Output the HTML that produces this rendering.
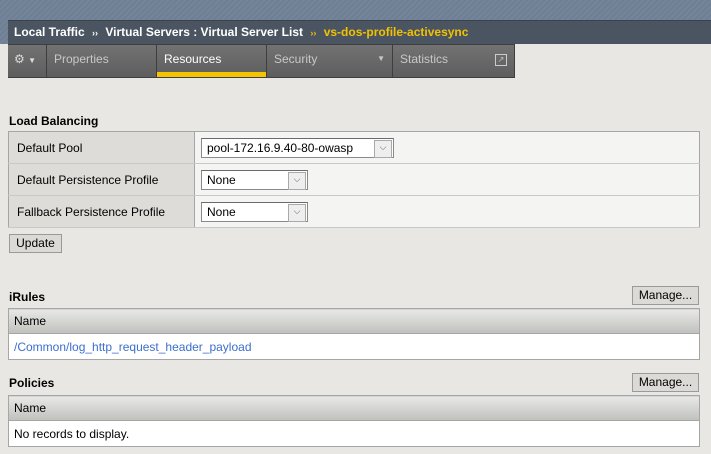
<!DOCTYPE html>
<html><head><style>
*{box-sizing:border-box;margin:0;padding:0}
body{width:711px;height:454px;background:#e9e7e3;font-family:"Liberation Sans",sans-serif;font-size:12px;color:#000;position:relative;overflow:hidden}
.ab{position:absolute}
.top{left:0;top:0;width:711px;height:44px;background:repeating-linear-gradient(135deg,#6f7f93 0 2px,#74849a 2px 4px)}
.hdr{left:8px;top:20px;width:703px;height:24px;background:#4b5562;border-top:1px solid #3a424c;color:#fff;font-weight:bold;font-size:12px;line-height:23px;padding-left:6px}
.hdr .y{color:#f2c200}
.hdr .s{font-size:9px;margin:0 4px}
.tabs{left:8px;top:44px;width:507px;height:34px;background:#3e3e3e}
.tab{position:absolute;top:1px;height:32px;background:linear-gradient(#727272,#5e5e5e);color:#c8c8c8;font-size:12px;line-height:28px;padding-left:7px}
.tab.on{color:#fff}
.tab.on:after{content:"";position:absolute;left:0;right:0;bottom:0;height:5px;background:#f5c400}
h3{position:absolute;left:9px;font-size:12px;font-weight:bold}
table{position:absolute;left:8px;width:692px;border-collapse:collapse;border:1px solid #a6a6a6}
.lb td{height:32px;border-bottom:1px solid #c8c8c8}
.lb td.l{background:#dedcd9;width:186px;padding-left:8px;border-right:1px solid #a6a6a6}
.lb td.v{background:#f4f4f3;padding-left:6px}
.sel{display:inline-block;height:20px;border:1px solid #8a8a8a;border-top-color:#6a6a6a;background:#fff;position:relative;padding-left:5px;line-height:18px;font-size:12px;vertical-align:middle}
.sel:after{content:"⌵";position:absolute;right:1px;top:1px;width:16px;height:16px;background:#eee;border:1px solid #aaa;font-size:9px;text-align:center;line-height:12px;color:#555}
.btn{position:absolute;background:#dcdad6;border:1px solid #9a9a9a;font-size:12px;text-align:center;line-height:16px}
.gt th{height:25px;background:linear-gradient(#e8e8e6,#c0c0bd);text-align:left;font-weight:normal;padding-left:5px;border-bottom:1px solid #a6a6a6}
.gt td{height:26px;background:#fff;padding-left:5px}
</style></head><body>
<div class="ab top"></div>
<div class="ab hdr">Local Traffic <span class="s">››</span> Virtual Servers : Virtual Server List <span class="s y">››</span> <span class="y">vs-dos-profile-activesync</span></div>
<div class="ab tabs">
<div class="tab" style="left:0;width:38px;color:#ddd;padding-left:6px">⚙ <span style="font-size:8px">▼</span></div>
<div class="tab" style="left:39px;width:109px">Properties</div>
<div class="tab on" style="left:149px;width:109px">Resources</div>
<div class="tab" style="left:259px;width:125px">Security<span style="position:absolute;right:7px;font-size:8px">▼</span></div>
<div class="tab" style="left:385px;width:121px">Statistics<span style="position:absolute;right:7px;top:9px;width:12px;height:12px;border:1px solid #ccc;font-size:8px;line-height:10px;text-align:center">↗</span></div>
</div>
<h3 style="top:114px">Load Balancing</h3>
<table class="lb" style="top:131px">
<tr><td class="l">Default Pool</td><td class="v"><span class="sel" style="width:193px">pool-172.16.9.40-80-owasp</span></td></tr>
<tr><td class="l">Default Persistence Profile</td><td class="v"><span class="sel" style="width:107px">None</span></td></tr>
<tr><td class="l">Fallback Persistence Profile</td><td class="v"><span class="sel" style="width:107px">None</span></td></tr>
</table>
<div class="btn" style="left:9px;top:234px;width:53px;height:19px">Update</div>
<h3 style="top:290px">iRules</h3>
<div class="btn" style="left:632px;top:286px;width:67px;height:19px">Manage...</div>
<table class="gt" style="top:308px"><tr><th>Name</th></tr><tr><td style="color:#3a6fd0">/Common/log_http_request_header_payload</td></tr></table>
<h3 style="top:376px">Policies</h3>
<div class="btn" style="left:632px;top:373px;width:67px;height:19px">Manage...</div>
<table class="gt" style="top:395px"><tr><th>Name</th></tr><tr><td>No records to display.</td></tr></table>
</body></html>
